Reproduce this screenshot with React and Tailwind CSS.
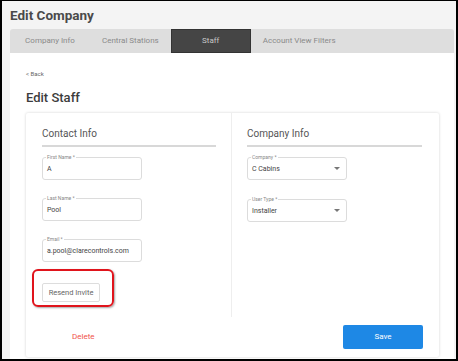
import React from "react";

const tabs = ["Company Info", "Central Stations", "Staff", "Account View Filters"];

function Field({ label, value, select }) {
  return (
    <div className="relative flex h-[23px] w-[100px] shrink-0 items-center rounded-[3px] border border-[#dcdcdc] pl-[4px] pr-[6px] pt-[2px]">
      <span className="absolute -top-[4px] left-[3px] bg-white px-[1px] text-[5px] leading-[7px] text-[#888]">
        {label}
      </span>
      <span className="flex-1 whitespace-nowrap text-[7px] text-[#444]">{value}</span>
      {select && (
        <svg width="6" height="4" viewBox="0 0 6 4" className="mt-[-1px]">
          <path d="M0 0 L6 0 L3 3 Z" fill="#777" />
        </svg>
      )}
    </div>
  );
}

export default function App() {
  return (
    <div
      className="flex h-[361px] w-[458px] flex-col overflow-hidden border-b-2 border-l-2 border-r-2 border-t border-black bg-[#f4f4f4] text-[#444]"
      style={{ fontFamily: "Roboto, 'Liberation Sans', sans-serif" }}
    >
      {/* page header */}
      <div className="flex h-[28px] shrink-0 items-center pl-[8px] pt-[1px] text-[13.5px] font-bold text-[#4a4a4a]">
        Edit Company
      </div>

      <div className="mr-[2px] ml-[8px] flex flex-1 flex-col">
        {/* tabs */}
        <div className="flex h-[24px] shrink-0 rounded-t-[3px] bg-[#dedede]">
          {tabs.map((t) => (
            <div
              key={t}
              className={
                t === "Staff"
                  ? "flex min-w-[80px] items-center justify-center border border-[#333] bg-[#454545] px-[12px] text-[8px] text-[#c8c8c8]"
                  : "flex min-w-[80px] items-center justify-center px-[12px] text-[8px] text-[#8a8a8a]"
              }
            >
              {t}
            </div>
          ))}
        </div>

        {/* content */}
        <div className="flex flex-1 flex-col bg-white pl-[16px] pr-[15px] pb-[6px]">
          <div className="mt-[17px] text-[6px] leading-[8px] text-[#666]">&lt; Back</div>
          <div className="mt-[12px] text-[13px] font-medium leading-[16px] text-[#3c3c3c]">
            Edit Staff
          </div>

          <div className="mt-[7px] flex flex-1 flex-col rounded-[2px] bg-white px-[16px] pb-[8px] shadow-[0_0_3px_rgba(0,0,0,0.18)]">
            <div className="flex">
              {/* contact info */}
              <div className="flex w-[174px] flex-col pt-[14px]">
                <div className="border-b-2 border-[#d8d8d8] pb-[4px] text-[10px] leading-[14px] text-[#555]">
                  Contact Info
                </div>
                <div className="mt-[10px] flex flex-col gap-[18px]">
                  <Field label="First Name *" value="A" />
                  <Field label="Last Name *" value="Pool" />
                  <Field label="Email *" value="a.pool@clarecontrols.com" />
                </div>
                <div className="relative mt-[16px] mb-[15px] self-start">
                  <button className="h-[19px] w-[58px] rounded-[2px] border border-[#ddd] bg-white text-[7.5px] text-[#666]">
                    Resend Invite
                  </button>
                  <div className="pointer-events-none absolute -left-[10px] -top-[9px] h-[38px] w-[82px] rounded-[6px] border-2 border-[#e0141c] shadow-[1px_1px_2px_rgba(0,0,0,0.35)]" />
                </div>
              </div>

              <div className="mx-[15px] w-px bg-[#eeeeee]" />

              {/* company info */}
              <div className="flex w-[175px] flex-col pt-[14px]">
                <div className="border-b-2 border-[#d8d8d8] pb-[4px] text-[10px] leading-[14px] text-[#555]">
                  Company Info
                </div>
                <div className="mt-[10px] flex flex-col gap-[19px]">
                  <Field label="Company *" value="C Cabins" select />
                  <Field label="User Type *" value="Installer" select />
                </div>
              </div>
            </div>

            {/* footer */}
            <div className="mt-[8px] flex items-center justify-between">
              <span className="ml-[30px] text-[8px] text-[#f0524a]">Delete</span>
              <button className="h-[24px] w-[80px] rounded-[2px] bg-[#1e88e5] text-[8px] text-white">
                Save
              </button>
            </div>
          </div>
        </div>
      </div>
    </div>
  );
}
